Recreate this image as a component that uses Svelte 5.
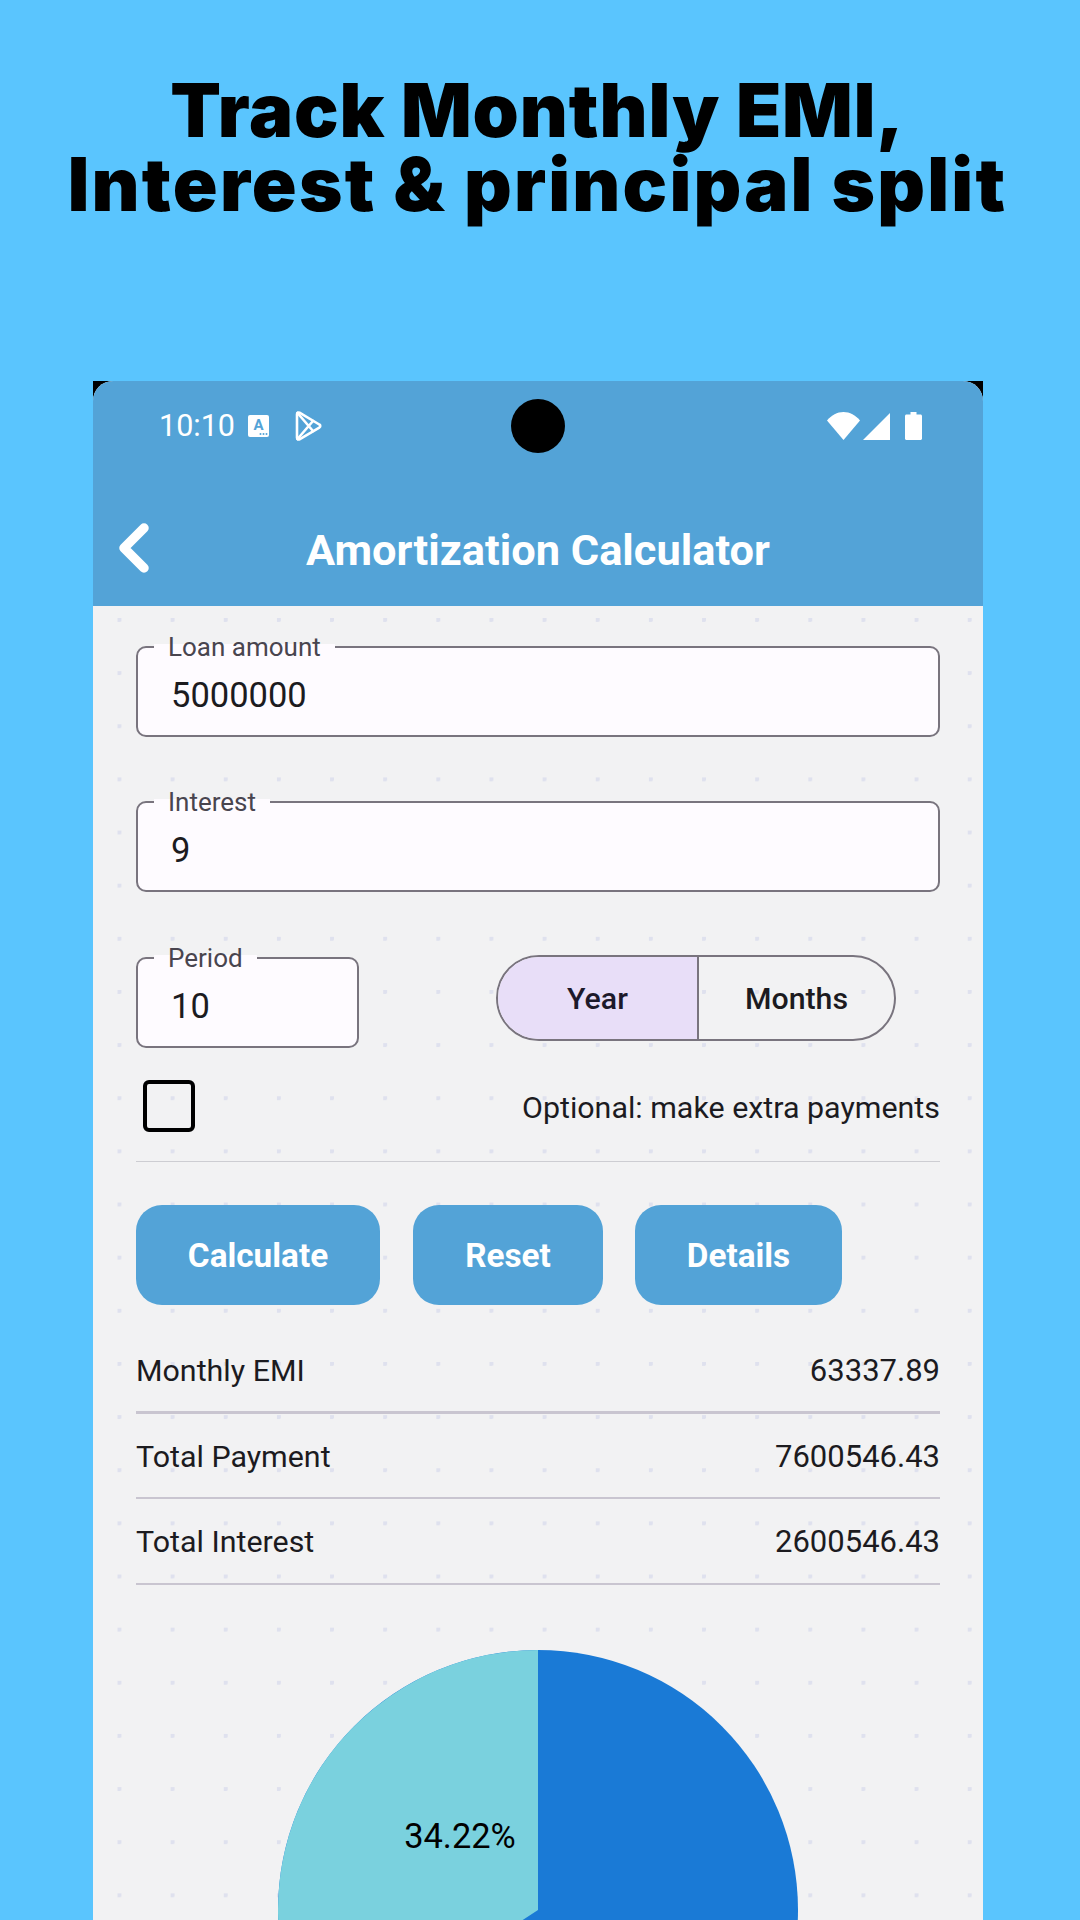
<script>
  const rows = [
    { label: "Monthly EMI", value: "63337.89", first: true },
    { label: "Total Payment", value: "7600546.43" },
    { label: "Total Interest", value: "2600546.43" },
  ];

  // pie slice for the interest share, measured from 12 o'clock going left
  const share = 34.22;
  const angle = (share / 100) * 2 * Math.PI;
  const r = 260;
  const ex = 260 - r * Math.sin(angle);
  const ey = 260 - r * Math.cos(angle);
  const slice = `M260 260 L260 0 A${r} ${r} 0 0 0 ${ex} ${ey} Z`;
</script>

<div class="page">
  <h1>
    <span class="l1">Track Monthly EMI,</span>
    <span class="l2">Interest &amp; principal split</span>
  </h1>

  <div class="phone">
    <div class="screen">
      <header>
        <div class="status">
          <span class="time">10:10</span>
          <svg class="ic-a" viewBox="0 0 21 22" width="21" height="22">
            <rect width="21" height="22" rx="2" fill="#fff" />
            <text x="10.5" y="15" text-anchor="middle" class="ic-a-letter">A</text>
            <circle cx="12.5" cy="19" r="1" fill="#53a3d7" />
            <circle cx="15.5" cy="19" r="1" fill="#53a3d7" />
            <circle cx="18.5" cy="19" r="1" fill="#53a3d7" />
          </svg>
          <svg class="ic-play" viewBox="0 0 27 30" width="27" height="30" fill="none" stroke="#fff" stroke-width="2.6" stroke-linejoin="round" stroke-linecap="round">
            <path d="M2 3.2c0-1.400 1.300-2.100 2.500-1.500l19.800 11.800c1.300.7 1.300 2.400 0 3.100L4.500 28.300C3.300 28.900 2 28.200 2 26.800Z" />
            <path d="M2.500 2 18 20M2.500 28 18 10" />
          </svg>
          <span class="camera"></span>
          <span class="status-right">
            <svg viewBox="0 0 33 28" width="33" height="28"><path d="M16.500 28 0 8.500C4.500 3.200 10.200 0 16.500 0S28.500 3.200 33 8.500Z" fill="#fff" /></svg>
            <svg viewBox="0 0 27 27" width="27" height="27"><path d="M27 0V27H0Z" fill="#fff" /></svg>
            <svg class="batt" viewBox="0 0 17 28" width="17" height="28"><path d="M5.500 0h6v2.500h4c.8 0 1.500.7 1.500 1.500v22.500c0 .8-.7 1.500-1.500 1.500h-14C.7 28 0 27.300 0 26.500V4c0-.8.7-1.500 1.500-1.500h4Z" fill="#fff" /></svg>
          </span>
        </div>
        <div class="titlebar">
          <svg class="back" viewBox="0 0 30 50" width="30" height="50" fill="none" stroke="#fff" stroke-width="9.500" stroke-linecap="round" stroke-linejoin="round">
            <path d="M25 5 5 25l20 20" />
          </svg>
          <span class="title">Amortization Calculator</span>
        </div>
      </header>

      <main>
        <div class="field">
          <label>Loan amount</label>
          <span class="val">5000000</span>
        </div>
        <div class="field second">
          <label>Interest</label>
          <span class="val">9</span>
        </div>

        <div class="period-row">
          <div class="field small">
            <label>Period</label>
            <span class="val">10</span>
          </div>
          <div class="segmented">
            <div class="seg on">Year</div>
            <div class="seg">Months</div>
          </div>
        </div>

        <div class="check-row">
          <span class="box"></span>
          <span class="optional">Optional: make extra payments</span>
        </div>

        <div class="buttons">
          <button class="b1">Calculate</button>
          <button class="b2">Reset</button>
          <button class="b3">Details</button>
        </div>

        <div class="results">
          {#each rows as row}
            <div class="row" class:first={row.first}>
              <span>{row.label}</span>
              <span class="num">{row.value}</span>
            </div>
          {/each}
        </div>

        <svg class="pie" viewBox="0 0 520 520" width="520" height="520">
          <circle cx="260" cy="260" r="260" fill="#1a7ad6" />
          <path d={slice} fill="#7ad1de" />
          <text x="182" y="198" text-anchor="middle" class="pie-label">34.22%</text>
        </svg>
      </main>
    </div>
  </div>
</div>

<style>
  :global(body) {
    margin: 0;
    background: #5ac5fe;
  }
  .page {
    width: 1080px;
    height: 1920px;
    overflow: hidden;
    background: #5ac5fe;
    font-family: Roboto, "Liberation Sans", sans-serif;
    color: #1c1b1f;
  }
  h1 {
    margin: 0;
    height: 381px;
    box-sizing: border-box;
    padding: 73px 5px 0 0;
    text-align: center;
    font-family: Inter, "Liberation Sans", sans-serif;
    font-size: 74px;
    font-weight: 900;
    line-height: 74px;
    color: #000;
  }
  h1 span {
    display: block;
    white-space: nowrap;
  }
  .l1 {
    letter-spacing: 0.9px;
  }
  .l2 {
    letter-spacing: 2.2px;
  }
  .phone {
    margin-left: 93px;
    width: 890px;
    background: #000;
  }
  .screen {
    border-radius: 20px 20px 0 0;
    overflow: hidden;
    background: #f2f2f3;
  }
  header {
    height: 225px;
    background: #53a3d7;
    color: #fff;
  }
  .status {
    height: 90px;
    position: relative;
    display: flex;
    align-items: center;
    padding: 0 61px 0 66px;
    box-sizing: border-box;
  }
  .time {
    font-size: 30.5px;
    width: 89px;
    margin-top: -1px;
  }
  .ic-a-letter {
    font-family: Roboto, sans-serif;
    font-weight: 700;
    font-size: 15px;
    fill: #53a3d7;
  }
  .ic-play {
    margin-left: 26px;
  }
  .camera {
    position: absolute;
    left: 418px;
    top: 18px;
    width: 54px;
    height: 54px;
    border-radius: 50%;
    background: #000;
  }
  .status-right {
    margin-left: auto;
    display: flex;
    align-items: center;
    gap: 3px;
  }
  .batt {
    margin-left: 12px;
  }
  .titlebar {
    position: relative;
    height: 135px;
    display: flex;
    align-items: flex-start;
    justify-content: center;
  }
  .title {
    margin-top: 53px;
    font-size: 43.4px;
    font-weight: 700;
    line-height: 54px;
  }
  .back {
    position: absolute;
    left: 26px;
    top: 52px;
  }
  main {
    padding: 40px 43px 0 43px;
    background-color: #f2f2f3;
    background-image: radial-gradient(circle at 1.75px 1.75px, #dfe1ee 2.3px, transparent 2.5px);
    background-size: 53.15px 53.15px;
    background-position: 24.5px 12px;
    height: 1400px;
    box-sizing: border-box;
  }
  .field {
    position: relative;
    box-sizing: border-box;
    height: 90.5px;
    background: #fefbff;
    border: 2.4px solid #79747e;
    border-radius: 10px;
    padding: 24.5px 0 0 33px;
  }
  .field.second {
    margin-top: 64.5px;
  }
  .field.small {
    width: 223px;
    margin-top: 2px;
    flex-shrink: 0;
  }
  label {
    position: absolute;
    left: 16px;
    top: -16px;
    padding: 0 14px;
    font-size: 26px;
    line-height: 30px;
    color: #49454f;
    background: linear-gradient(transparent 0 12px, #fefbff 12px);
  }
  .val {
    font-size: 34.5px;
    line-height: 44px;
  }
  .period-row {
    margin-top: 63.5px;
    display: flex;
    gap: 137px;
    align-items: flex-start;
  }
  .segmented {
    width: 400px;
    height: 86px;
    box-sizing: border-box;
    border: 2.4px solid #79747e;
    border-radius: 43px;
    overflow: hidden;
    display: flex;
  }
  .seg {
    flex: 1;
    display: flex;
    align-items: center;
    justify-content: center;
    font-size: 30.3px;
    font-weight: 500;
  }
  .seg.on {
    flex: 0 0 199px;
    background: #e8def8;
    border-right: 2.4px solid #79747e;
    color: #1d192b;
  }
  .check-row {
    margin-top: 32.5px;
    padding: 0 0 29px 7px;
    border-bottom: 1.5px solid #cdcdd2;
    display: flex;
    align-items: center;
    justify-content: space-between;
  }
  .box {
    box-sizing: border-box;
    width: 52px;
    height: 52px;
    border: 4px solid #000;
    border-radius: 6px;
  }
  .optional {
    font-size: 30.4px;
    margin-top: 2px;
  }
  .buttons {
    margin-top: 43px;
    display: flex;
    gap: 32px;
  }
  button {
    height: 100px;
    border: 0;
    border-radius: 26px;
    background: #53a3d7;
    color: #fff;
    font-family: inherit;
    font-size: 33.3px;
    font-weight: 700;
    padding: 0;
  }
  .b1 { width: 244px; }
  .b2 { width: 190px; margin-left: 1px; }
  .b3 { width: 207px; }
  .results {
    margin-top: 23px;
  }
  .row {
    height: 85.5px;
    box-sizing: border-box;
    padding-top: 1.5px;
    border-bottom: 2px solid #c9c5d0;
    display: flex;
    align-items: center;
    justify-content: space-between;
    font-size: 30.4px;
  }
  .row.first {
    border-bottom-width: 3px;
  }
  .num {
    font-size: 31px;
  }
  .pie {
    display: block;
    margin: 65px auto 0;
  }
  .pie-label {
    font-family: Roboto, sans-serif;
    font-size: 34.4px;
    fill: #000;
  }
</style>
